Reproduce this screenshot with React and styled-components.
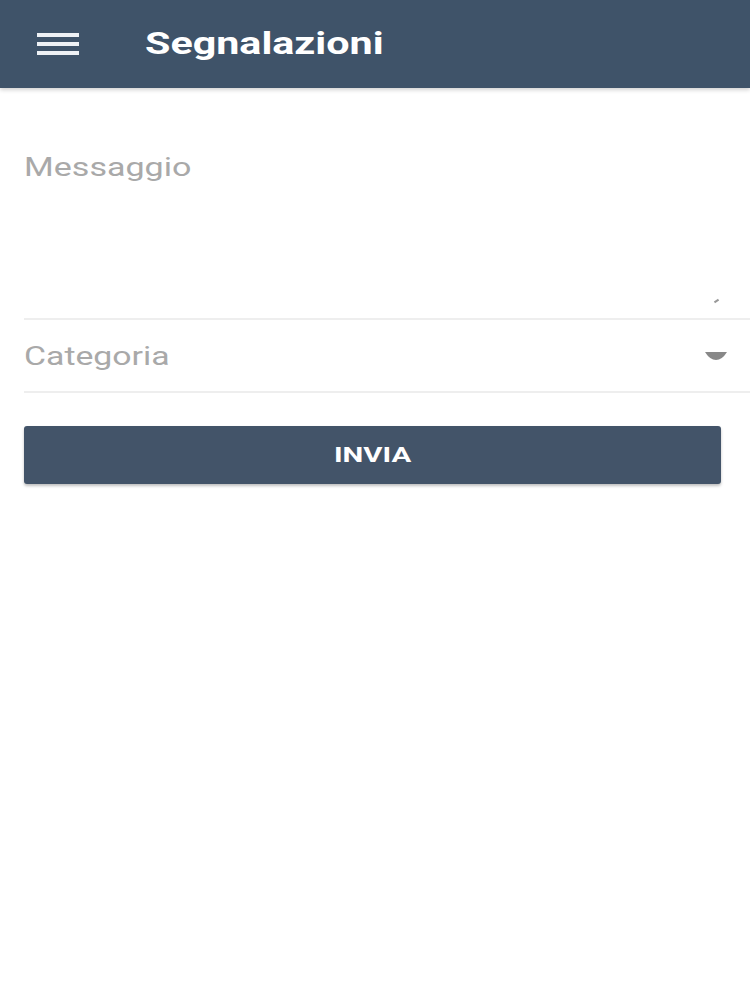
import { createGlobalStyle, styled } from "styled-components";

const GlobalStyle = createGlobalStyle`
  html, body {
    margin: 0;
    padding: 0;
    background: #fff;
    font-family: Roboto, "Liberation Sans", Arial, sans-serif;
  }
`;

// the screenshot is stretched sideways, so text gets a horizontal scale
const Wide = styled.span`
  display: inline-block;
  transform: scaleX(${(p) => p.$scale || 1.32});
  transform-origin: ${(p) => (p.$center ? "center" : "left")} center;
`;

const Page = styled.div`
  width: 750px;
  min-height: 1000px;
  background: #fff;
`;

const Toolbar = styled.header`
  height: 88px;
  background: #3f5369;
  display: flex;
  align-items: center;
  padding-left: 37px;
  box-shadow: 0 2px 4px rgba(0, 0, 0, 0.18);
`;

const MenuIcon = styled.div`
  width: 42px;
  display: flex;
  flex-direction: column;
  gap: 5px;
  margin-right: 66px;
  span {
    display: block;
    height: 4px;
    background: #eef1f5;
  }
`;

const Title = styled.h1`
  margin: 0;
  color: #fff;
  font-size: 31px;
  font-weight: 700;
  margin-top: -2px;
`;

const Form = styled.div`
  padding-left: 24px;
  display: flex;
  flex-direction: column;
`;

const MessageField = styled.div`
  position: relative;
  height: 230px;
  border-bottom: 2px solid #eeeeee;
`;

const Placeholder = styled.div`
  color: #a9a9a9;
  font-size: 26px;
  padding-top: ${(p) => p.$top || 0}px;
`;

const ResizeMark = styled.div`
  position: absolute;
  right: 31px;
  bottom: 16px;
  width: 5px;
  height: 2px;
  background: #999;
  transform: rotate(-35deg);
`;

const SelectRow = styled.div`
  height: 71px;
  border-bottom: 2px solid #eeeeee;
  display: flex;
  align-items: center;
  justify-content: space-between;
  padding-right: 22px;
`;

const Arrow = styled.svg`
  width: 24px;
  height: 10px;
`;

const SubmitButton = styled.button`
  margin-top: 33px;
  width: 697px;
  height: 58px;
  border: none;
  border-radius: 3px;
  background: #435469;
  color: #fff;
  font-family: Roboto, "Liberation Sans", Arial, sans-serif;
  font-size: 21px;
  font-weight: 700;
  box-shadow: 0 2px 3px rgba(0, 0, 0, 0.25);
`;

export default function App() {
  return (
    <Page>
      <GlobalStyle />
      <Toolbar>
        <MenuIcon>
          <span />
          <span />
          <span />
        </MenuIcon>
        <Title>
          <Wide $scale={1.33}>Segnalazioni</Wide>
        </Title>
      </Toolbar>
      <Form>
        <MessageField>
          <Placeholder $top={64}>
            <Wide $scale={1.31}>Messaggio</Wide>
          </Placeholder>
          <ResizeMark />
        </MessageField>
        <SelectRow>
          <Placeholder>
            <Wide $scale={1.3}>Categoria</Wide>
          </Placeholder>
          <Arrow viewBox="0 0 24 10">
            <path d="M1 1 H23 Q18 9 12 9 Q6 9 1 1 Z" fill="#888" />
          </Arrow>
        </SelectRow>
        <SubmitButton>
          <Wide $scale={1.4} $center>
            INVIA
          </Wide>
        </SubmitButton>
      </Form>
    </Page>
  );
}
